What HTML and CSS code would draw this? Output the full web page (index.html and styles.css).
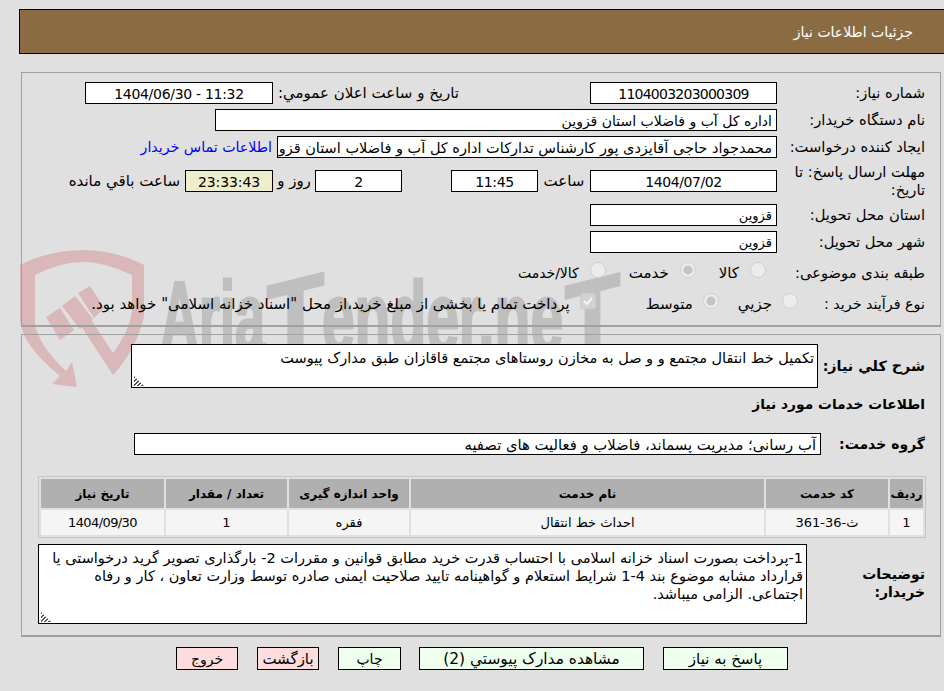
FILE: index.html
```html
<!DOCTYPE html>
<html lang="fa" dir="rtl">
<head>
<meta charset="utf-8">
<title>جزئیات اطلاعات نیاز</title>
<link rel="stylesheet" href="styles.css">
</head>
<body>
<header class="title-bar">جزئیات اطلاعات نیاز</header>

<svg class="watermark" width="944" height="200" viewBox="0 240 944 200" aria-hidden="true">
  <path class="wm-shield" d="M20 265 Q50 250 83 250 Q115 250 144 265 L144 317 Q136 350 113 375 L79 323 L90 318 L113 353 Q130 330 132 310 L132 275 Q105 262 83 262 Q60 262 35 275 L35 323 Q38 345 66 371 L72 362 L77 387 L52 384 L60 376 Q22 345 20 320 Z"/>
  <path class="wm-shield" d="M46 317 L60 308 L74 330 L60 340 Z M62 306 L75 296 L93 319 L80 329 Z M78 293 L90 286 L104 308 L94 318 Z"/>
  <g class="wm-text">
    <text x="160" y="352" textLength="105" lengthAdjust="spacingAndGlyphs">Aria</text>
    <text transform="translate(267 352) skewY(-14) translate(-267 -352)" x="267" y="356" textLength="57" lengthAdjust="spacingAndGlyphs">T</text>
    <text x="322" y="352" textLength="241" lengthAdjust="spacingAndGlyphs">ender.ne</text>
    <text transform="translate(565 352) skewY(-14) translate(-565 -352)" x="565" y="356" textLength="55" lengthAdjust="spacingAndGlyphs">T</text>
  </g>
</svg>

<main>
<section class="panel panel-top">
  <div class="row">
    <label class="lbl">شماره نیاز:</label>
    <div class="box box-187 center num long">1104003203000309</div>
    <label class="lbl-mid">تاریخ و ساعت اعلان عمومي:</label>
    <div class="box box-188 center num wide">11:32 - 1404/06/30</div>
  </div>
  <div class="row">
    <label class="lbl">نام دستگاه خریدار:</label>
    <div class="box box-562">اداره کل آب و فاضلاب استان قزوین</div>
  </div>
  <div class="row">
    <label class="lbl">ایجاد کننده درخواست:</label>
    <div class="box box-500 clip">محمدجواد حاجی آقایزدی پور کارشناس تدارکات اداره کل آب و فاضلاب استان قزوین</div>
    <a class="link" href="#">اطلاعات تماس خریدار</a>
  </div>
  <div class="row row-deadline">
    <label class="lbl lbl-wrap">مهلت ارسال پاسخ: تا تاریخ:</label>
    <div class="box box-187 center num">1404/07/02</div>
    <span class="txt txt-hour">ساعت</span>
    <div class="box box-87 center num">11:45</div>
    <div class="box box-87 center num gap-days">2</div>
    <span class="txt txt-days">روز و</span>
    <div class="box box-88 center num timer">23:33:43</div>
    <span class="txt txt-left">ساعت باقي مانده</span>
  </div>
  <div class="row">
    <label class="lbl">استان محل تحویل:</label>
    <div class="box box-187 short">قزوین</div>
  </div>
  <div class="row">
    <label class="lbl">شهر محل تحویل:</label>
    <div class="box box-187 short">قزوین</div>
  </div>
  <div class="row row-choice row-cat">
    <label class="lbl">طبقه بندی موضوعی:</label>
    <span class="radio r1"></span><span class="txt">کالا</span>
    <span class="radio on r2"></span><span class="txt">خدمت</span>
    <span class="radio r3"></span><span class="txt txt-both">کالا/خدمت</span>
  </div>
  <div class="row row-choice row-proc">
    <label class="lbl lbl-proc">نوع فرآیند خرید :</label>
    <span class="radio r4"></span><span class="txt">جزيي</span>
    <span class="radio on r5"></span><span class="txt">متوسط</span>
    <span class="check"><svg width="16" height="16" viewBox="0 0 16 16"><path d="M4 8 L7 11 L12 5" fill="none" stroke="#f4f4f4" stroke-width="2"/></svg></span>
    <span class="txt txt-pay">پرداخت تمام یا بخشی از مبلغ خرید،از محل "اسناد خزانه اسلامی" خواهد بود.</span>
  </div>
</section>

<section class="panel panel-bottom">
  <div class="row-desc">
    <label class="lbl-b">شرح کلي نیاز:</label>
    <div class="area area-need">تکمیل خط انتقال مجتمع و و صل به مخازن روستاهای مجتمع قاقازان طبق مدارک پیوست<i class="grip"></i></div>
  </div>
  <h2 class="section-title">اطلاعات خدمات مورد نیاز</h2>
  <div class="row-group">
    <label class="lbl-b">گروه خدمت:</label>
    <div class="box box-group">آب رسانی؛ مدیریت پسماند، فاضلاب و فعالیت های تصفیه</div>
  </div>
  <table class="grid">
    <thead>
      <tr><th class="c1">ردیف</th><th class="c2">کد خدمت</th><th class="c3">نام خدمت</th><th class="c4">واحد اندازه گیری</th><th class="c5">تعداد / مقدار</th><th class="c6">تاریخ نیاز</th></tr>
    </thead>
    <tbody>
      <tr><td>1</td><td>ث-36-361</td><td>احداث خط انتقال</td><td>فقره</td><td>1</td><td class="tnum">1404/09/30</td></tr>
    </tbody>
  </table>
  <div class="row-notes">
    <label class="lbl-b lbl-notes">توضیحات خریدار:</label>
    <div class="area area-notes">1-پرداخت بصورت اسناد خزانه اسلامی با احتساب قدرت خرید مطابق قوانین و مقررات 2- بارگذاری تصویر گرید درخواستی یا قرارداد مشابه موضوع بند 4-1 شرایط استعلام و گواهینامه تایید صلاحیت ایمنی صادره توسط وزارت تعاون ، کار و رفاه اجتماعی. الزامی میباشد.<i class="grip"></i></div>
  </div>
</section>

<nav class="actions">
  <button class="btn go b-reply">پاسخ به نیاز</button>
  <button class="btn go b-docs">مشاهده مدارک پیوستي (2)</button>
  <button class="btn go b-print">چاپ</button>
  <button class="btn stop b-back">بازگشت</button>
  <button class="btn stop b-exit">خروج</button>
</nav>
</main>
</body>
</html>
```
FILE: styles.css
```css
* { box-sizing: border-box; }
html, body { margin: 0; }
body {
  position: relative;
  width: 944px;
  height: 691px;
  overflow: hidden;
  background: #e0e0e0;
  color: #000;
  font: 14px/18px "DejaVu Sans", sans-serif;
}
.title-bar {
  height: 45px;
  margin: 9px 0 0 19px;
  padding: 13px 31px 0 0;
  background: #8b6c42;
  border: 1px solid #000;
  border-right: 0;
  color: #fff;
}
.watermark { position: absolute; left: 0; top: 240px; z-index: 0; pointer-events: none; }
.wm-shield { fill: #dab7b8; }
.wm-text {
  font: bold 100px "Liberation Sans Narrow", "Liberation Sans", sans-serif;
  fill: #bfbfbf;
  stroke: #bfbfbf;
  stroke-width: 3px;
  direction: ltr;
}
main { position: relative; z-index: 1; padding: 0 3px 0 21px; }
.panel { border: 1px solid #a0a0a0; border-width: 1px 1px 2px 1px; }
.panel-top { height: 255px; margin-top: 18px; padding: 9px 15px 0 0; }
.panel-bottom { height: 303px; margin-top: 7px; padding: 9px 15px 0 0; }
.row { display: flex; align-items: center; min-height: 22px; margin-bottom: 5px; }
.lbl { width: 148px; flex: none; white-space: nowrap; font-size: 14.7px; }
.lbl-mid { width: 181px; margin: 0 131px 0 5px; flex: none; white-space: nowrap; font-size: 15px; text-align: right; }
.lbl-wrap { margin: -7px 0; white-space: normal; padding-left: 4px; }
.box {
  height: 22px;
  flex: none;
  padding: 0 4px;
  background: #fff;
  border: 1px solid #000;
  line-height: 22px;
  white-space: nowrap;
}
.clip { overflow: hidden; font-size: 14.5px; }
.center { text-align: center; }
.num { letter-spacing: -.4px; }
.long { letter-spacing: -.75px; }
.wide { letter-spacing: -.3px; }
.short { font-size: 13px; }
.box-187 { width: 187px; }
.box-188 { width: 188px; }
.box-562 { width: 562px; }
.box-500 { width: 500px; }
.box-87 { width: 87px; }
.box-88 { width: 88px; }
.box-group { width: 687px; font-size: 14.8px; }
.link { margin-right: 5px; color: #0000ee; font-size: 14.2px; text-decoration: none; white-space: nowrap; }
.row-deadline { margin-top: 12px; margin-bottom: 12px; }
.txt { font-size: 15px; white-space: nowrap; }
.txt-hour { width: 52px; text-align: center; }
.gap-days { margin-right: 49px; }
.txt-days { width: 42px; text-align: center; }
.timer { background: #eeeecc; letter-spacing: -.1px; }
.txt-left { margin-right: 5px; }
.row-cat { margin-top: 9px; margin-bottom: 9px; }
.row-proc { margin-bottom: 0; }
.lbl-proc { width: 127px; font-size: 14.3px; }
.radio {
  width: 16px;
  height: 16px;
  flex: none;
  border: 1px solid #d0d0d0;
  border-radius: 50%;
  background: #ececec;
}
.radio.on { background: radial-gradient(circle, #c4c4c4 0 4px, #ececec 5px); }
.row-choice .radio { margin-top: -6px; }
.row-choice .txt { margin-right: 11px; }
.row-proc .txt { margin-right: 10px; }
.txt-both { font-size: 14px; }
.r1 { margin-right: 11px; }
.r2 { margin-right: 23px; }
.r3 { margin-right: 23px; }
.r4 { margin-right: 0; }
.r5 { margin-right: 19px; }
.check {
  width: 16px;
  height: 16px;
  margin: -6px 50px 0 0;
  flex: none;
  background: #d2d2d2;
  border: 1px solid #cccccc;
  border-radius: 2px;
}
.check svg { display: block; margin: -1px; }
.row-desc, .row-group, .row-notes { display: flex; }
.row-desc { align-items: center; height: 44px; }
.lbl-b { width: 107px; flex: none; font-weight: bold; }
.row-desc .lbl-b { font-size: 14.3px; }
.area {
  position: relative;
  flex: none;
  padding: 4px 3px 0 8px;
  background: #fff;
  border: 1px solid #000;
  font-size: 14.5px;
  line-height: 18px;
}
.area-need { width: 687px; height: 44px; }
.area-notes { width: 769px; height: 80px; }
.grip {
  position: absolute;
  left: 2px;
  bottom: 1px;
  width: 10px;
  height: 10px;
  background: repeating-linear-gradient(135deg, #555 0 1.500px, transparent 1.500px 3px);
  clip-path: polygon(0 0, 100% 100%, 0 100%);
}
.section-title { margin: 7px 0 0; font: bold 13.8px/18px "DejaVu Sans", sans-serif; }
.row-group { align-items: center; height: 22px; margin-top: 20px; }
.row-group .lbl-b { width: 104px; }
.grid {
  width: 888px;
  height: 62px;
  margin: 21px -1px 0 0;
  border: 1px solid #c4c4c4;
  border-spacing: 2px;
  table-layout: fixed;
  background: #e0e0e0;
  font-size: 13px;
}
.grid th { height: 29px; padding: 0; background: #b0b0b0; font-size: 12px; font-weight: bold; }
.grid td { height: 25px; padding: 0; background: #f5f5f5; text-align: center; }
.grid .tnum { letter-spacing: -.6px; }
.c1 { width: 33px; }
.c2 { width: 122px; }
.c3 { width: 353px; }
.c4 { width: 120px; }
.c5 { width: 121px; }
.c6 { width: 123px; }
.row-notes { margin-top: 6px; }
.lbl-notes { width: 118px; padding: 21px 0 0 30px; }
.actions { display: flex; gap: 19px; margin: 10px 153px 0 0; }
.btn {
  height: 23px;
  padding: 0;
  border: 1px solid #000;
  color: #000;
  font: 14px/18px "DejaVu Sans", sans-serif;
}
.go { background: #eeffee; }
.stop { background: #ffdddd; }
.b-reply { width: 125px; font-size: 15px; }
.b-docs { width: 225px; font-size: 15.4px; }
.b-print { width: 63px; margin-right: -1px; }
.b-back { width: 62px; font-size: 15px; }
.b-exit { width: 62px; }
```
